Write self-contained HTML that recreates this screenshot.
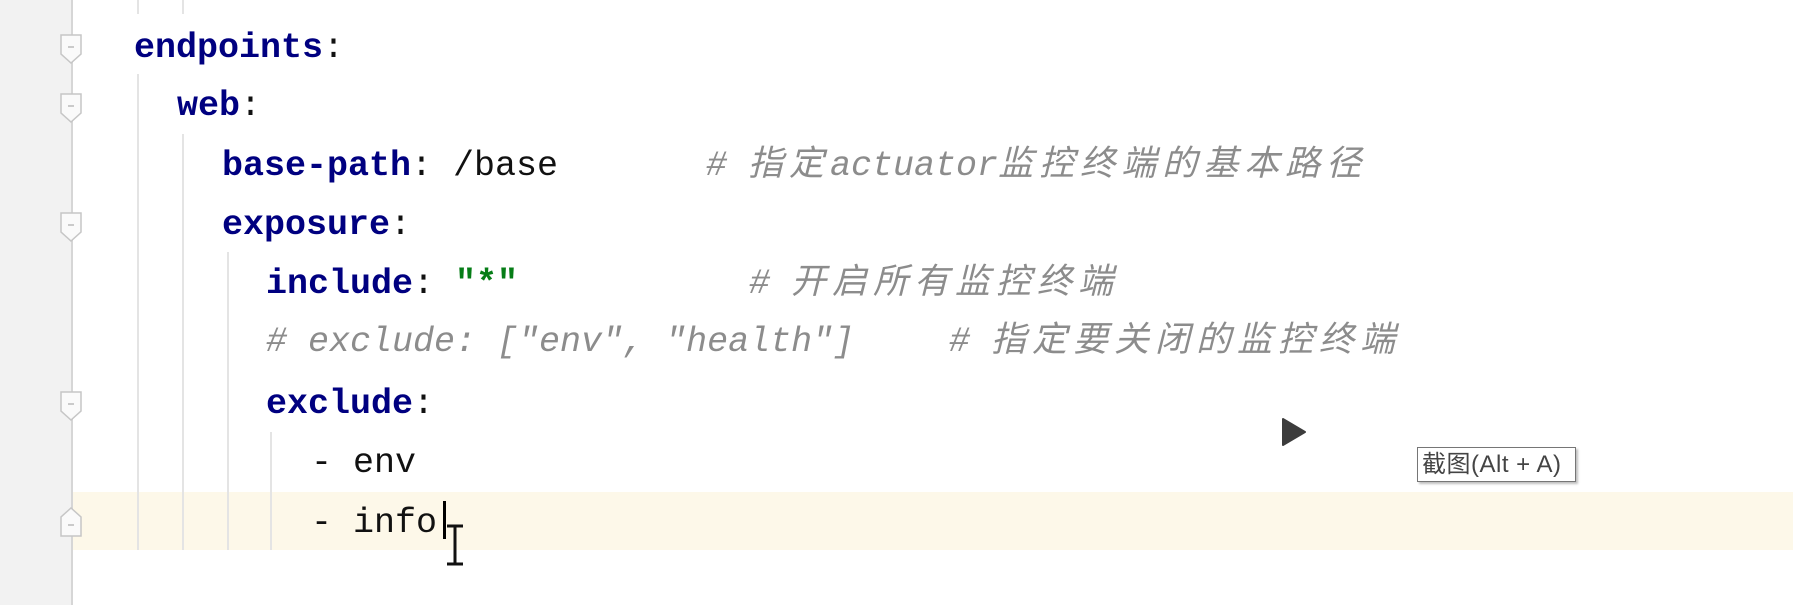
<!DOCTYPE html>
<html><head><meta charset="utf-8"><style>
html,body{margin:0;padding:0;width:1793px;height:605px;overflow:hidden;background:#fff;position:relative}
.g{position:absolute;left:0;top:0;width:71px;height:605px;background:#f2f2f2;border-right:2px solid #d6d6d6}
.hl{position:absolute;left:0;top:492px;width:1793px;height:58px;background:#fdf8e9}
.l{position:absolute;font-family:"Liberation Mono","Noto Sans CJK SC",monospace;font-size:35px;line-height:44px;white-space:pre;color:#111}
.k{color:#000080;font-weight:bold}
.s{color:#067d17;font-weight:bold}
.c{color:#8c8c8c;font-style:italic}
.cj{letter-spacing:6px}
.ig{position:absolute;width:2px;background:#e4e4e4}
.f{position:absolute;left:60px;width:22px;height:30px}
</style></head><body>
<div class="hl"></div>
<div class="g"></div>
<div class="ig" style="left:137px;top:0;height:14px"></div>
<div class="ig" style="left:182px;top:0;height:14px"></div>
<div class="ig" style="left:137px;top:74px;height:476px"></div>
<div class="ig" style="left:182px;top:134px;height:416px"></div>
<div class="ig" style="left:227px;top:252px;height:298px"></div>
<div class="ig" style="left:270px;top:432px;height:118px"></div>
<svg class="f" style="top:34px" viewBox="0 0 22 30"><path d="M1 1H21V20L11 29L1 20Z" fill="#fafafa" stroke="#c6c6c6" stroke-width="1.5"/><path d="M8 13H14" stroke="#bbb" stroke-width="1.5"/></svg>
<svg class="f" style="top:93px" viewBox="0 0 22 30"><path d="M1 1H21V20L11 29L1 20Z" fill="#fafafa" stroke="#c6c6c6" stroke-width="1.5"/><path d="M8 13H14" stroke="#bbb" stroke-width="1.5"/></svg>
<svg class="f" style="top:212px" viewBox="0 0 22 30"><path d="M1 1H21V20L11 29L1 20Z" fill="#fafafa" stroke="#c6c6c6" stroke-width="1.5"/><path d="M8 13H14" stroke="#bbb" stroke-width="1.5"/></svg>
<svg class="f" style="top:391px" viewBox="0 0 22 30"><path d="M1 1H21V20L11 29L1 20Z" fill="#fafafa" stroke="#c6c6c6" stroke-width="1.5"/><path d="M8 13H14" stroke="#bbb" stroke-width="1.5"/></svg>
<svg class="f" style="top:507px" viewBox="0 0 22 30"><path d="M1 29H21V10L11 1L1 10Z" fill="#fafafa" stroke="#c6c6c6" stroke-width="1.5"/><path d="M8 18H14" stroke="#bbb" stroke-width="1.5"/></svg>

<div class="l" style="left:134px;top:26px"><span class="k">endpoints</span>:</div>
<div class="l" style="left:177px;top:84px"><span class="k">web</span>:</div>
<div class="l" style="left:222px;top:144px"><span class="k">base-path</span>: /base</div>
<div class="l c" style="left:706px;top:144px"># <span class="cj">指定</span>actuator<span class="cj">监控终端的基本路径</span></div>
<div class="l" style="left:222px;top:203px"><span class="k">exposure</span>:</div>
<div class="l" style="left:266px;top:262px"><span class="k">include</span>: <span class="s">"*"</span></div>
<div class="l c" style="left:749px;top:262px"># <span class="cj">开启所有监控终端</span></div>
<div class="l c" style="left:266px;top:320px"># exclude: ["env", "health"]</div>
<div class="l c" style="left:949px;top:320px"># <span class="cj">指定要关闭的监控终端</span></div>
<div class="l" style="left:266px;top:382px"><span class="k">exclude</span>:</div>
<div class="l" style="left:311px;top:441px">- env</div>
<div class="l" style="left:311px;top:501px">- info</div>
<div style="position:absolute;left:443px;top:501px;width:3px;height:38px;background:#000"></div>
<svg style="position:absolute;left:444px;top:524px" width="22" height="44"><path d="M3 2H19M11 2V40M3 40H19" stroke="#111" stroke-width="3" fill="none"/></svg>
<svg style="position:absolute;left:1280px;top:416px" width="28" height="32"><path d="M3 3L25 16L3 29Z" fill="#3c3c3c" stroke="#3c3c3c" stroke-width="2" stroke-linejoin="round"/></svg>
<div style="position:absolute;left:1417px;top:447px;width:159px;height:35px;border:1px solid #767676;background:#fff;box-shadow:2px 2px 2px rgba(0,0,0,.25);font-family:'Liberation Sans','Noto Sans CJK SC',sans-serif;font-size:24px;line-height:33px;color:#444;padding-left:4px;box-sizing:border-box;white-space:nowrap;letter-spacing:0.5px">截图(Alt + A)</div>
</body></html>
